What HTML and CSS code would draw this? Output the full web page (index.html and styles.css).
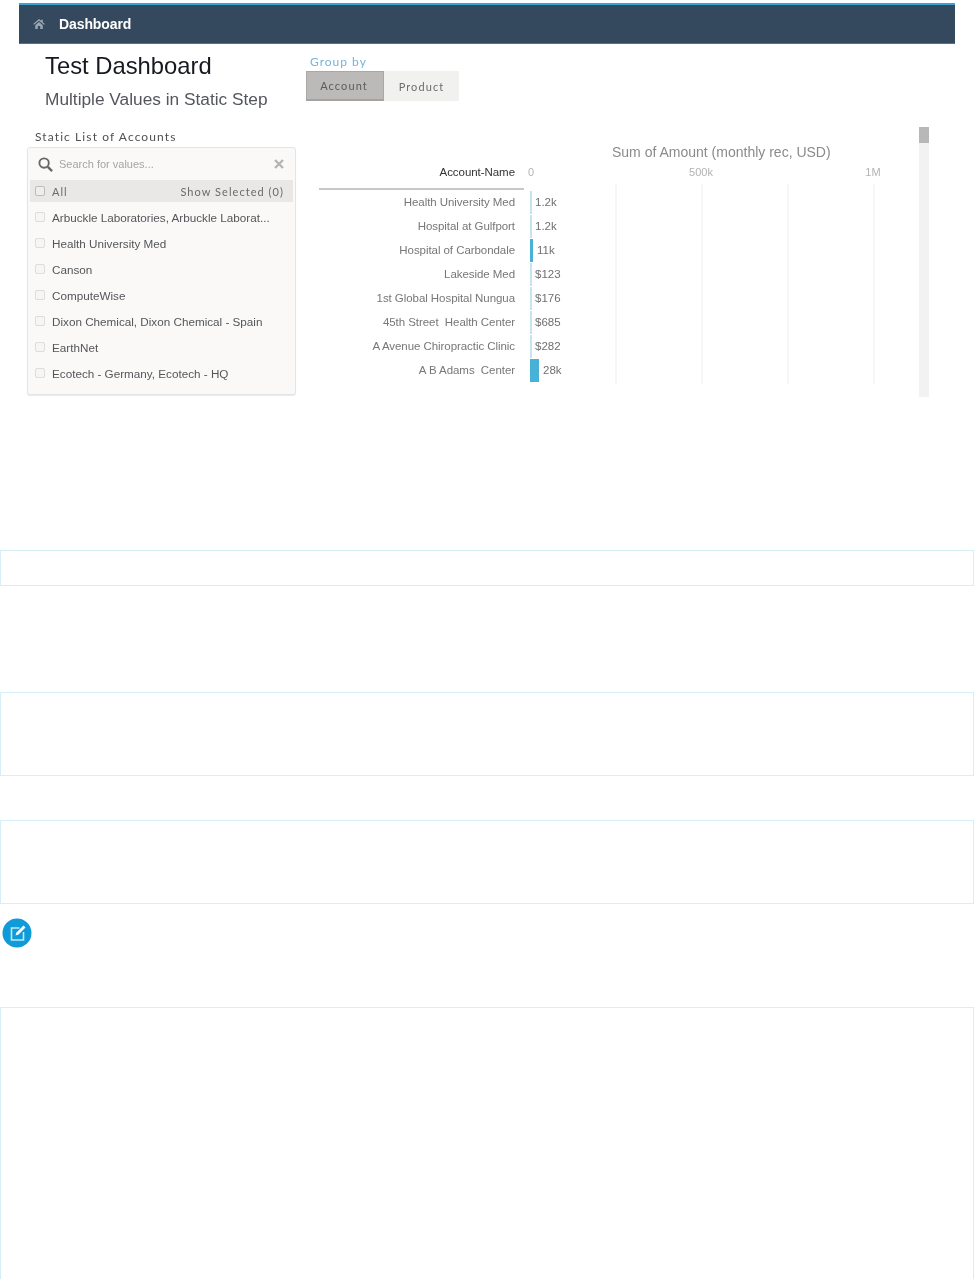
FILE: index.html
```html
<!DOCTYPE html>
<html lang="en">
<head>
<meta charset="utf-8">
<title>Test Dashboard</title>
<link rel="stylesheet" href="styles.css">
</head>
<body>
<section class="shot">
  <nav class="nav">
    <svg class="home" viewBox="0 0 14 12" aria-hidden="true"><path d="M7 0 0 6l1 1 6-5 6 5 1-1-2.500-2.100V1h-2v1.200zM2.500 7.500V12h3V8.500h3V12h3V7.500L7 3.700z"/></svg>
    <span class="nav-title">Dashboard</span>
  </nav>
  <div class="head">
    <div class="titles">
      <h1>Test Dashboard</h1>
      <h2>Multiple Values in Static Step</h2>
    </div>
    <div class="group">
      <div class="group-label">Group by</div>
      <div class="toggle"><span class="tog on">Account</span><span class="tog">Product</span></div>
    </div>
  </div>
  <div class="content">
    <div class="left">
      <div class="list-title">Static List of Accounts</div>
      <div class="panel">
        <div class="search">
          <svg class="mag" viewBox="0 0 16 16" aria-hidden="true"><circle cx="6.500" cy="6.500" r="5" fill="none" stroke="#666" stroke-width="2"/><path d="m10.500 10.500 4.500 4.500" stroke="#666" stroke-width="2.500"/></svg>
          <span class="placeholder">Search for values...</span>
          <svg class="clear" viewBox="0 0 10 10" aria-hidden="true"><path d="m1 1 8 8M9 1 1 9" stroke="#b5b5b5" stroke-width="2.400"/></svg>
        </div>
        <div class="all"><i class="check dark"></i><span class="all-label">All</span><span class="show">Show Selected (0)</span></div>
        <div class="items">
          <div class="item"><i class="check"></i>Arbuckle Laboratories, Arbuckle Laborat...</div>
          <div class="item"><i class="check"></i>Health University Med</div>
          <div class="item"><i class="check"></i>Canson</div>
          <div class="item"><i class="check"></i>ComputeWise</div>
          <div class="item"><i class="check"></i>Dixon Chemical, Dixon Chemical - Spain</div>
          <div class="item"><i class="check"></i>EarthNet</div>
          <div class="item"><i class="check"></i>Ecotech - Germany, Ecotech - HQ</div>
        </div>
      </div>
    </div>
    <div class="chart">
      <div class="plot">
        <i class="grid g1"></i><i class="grid g2"></i><i class="grid g3"></i><i class="grid g4"></i>
        <div class="measure">Sum of Amount (monthly rec, USD)</div>
        <div class="axis">
          <span class="axis-name">Account-Name</span>
          <span class="tick t0">0</span><span class="tick t1">500k</span><span class="tick t2">1M</span>
        </div>
        <div class="rule"></div>
        <div class="row"><span class="name">Health University Med</span><i class="bar thin" style="width:2px"></i><span class="val">1.2k</span></div>
        <div class="row"><span class="name">Hospital at Gulfport</span><i class="bar thin" style="width:2px"></i><span class="val">1.2k</span></div>
        <div class="row"><span class="name">Hospital of Carbondale</span><i class="bar" style="width:3px"></i><span class="val">11k</span></div>
        <div class="row"><span class="name">Lakeside Med</span><i class="bar thin" style="width:2px"></i><span class="val">$123</span></div>
        <div class="row"><span class="name">1st Global Hospital Nungua</span><i class="bar thin" style="width:2px"></i><span class="val">$176</span></div>
        <div class="row"><span class="name">45th Street&nbsp; Health Center</span><i class="bar thin" style="width:2px"></i><span class="val">$685</span></div>
        <div class="row"><span class="name">A Avenue Chiropractic Clinic</span><i class="bar thin" style="width:2px"></i><span class="val">$282</span></div>
        <div class="row"><span class="name">A B Adams&nbsp; Center</span><i class="bar" style="width:9px"></i><span class="val">28k</span></div>
      </div>
      <div class="scroll"><i class="thumb"></i></div>
    </div>
  </div>
</section>
<div class="box b1"></div>
<div class="box b2"></div>
<div class="box b3"></div>
<div class="note">
  <svg viewBox="0 0 30 30" aria-hidden="true"><circle cx="15" cy="15" r="14.500" fill="#0f9ad8"/><path d="M17.500 10H9.500v12h12v-8" fill="none" stroke="#bfe9fb" stroke-width="1.600"/><path d="m13.500 17.500 1-3 7-7 2 2-7 7z" fill="#fff"/></svg>
</div>
<div class="box b4"></div>
</body>
</html>
```
FILE: styles.css
```css
* { box-sizing: border-box; }
html, body { margin: 0; padding: 0; background: #fff; }
body { font-family: "Liberation Sans", Arial, sans-serif; height: 1279px; overflow: hidden; }
i { display: block; }

.shot { height: 405px; padding: 3px 19px 0; filter: blur(.45px); }
.nav { height: 41px; background: #34495e; border-top: 2px solid #3ba3d6; border-bottom: 1px solid #5b6d80; display: flex; align-items: center; padding-left: 14px; }
.home { width: 12px; height: 10px; fill: #9aa6b2; margin-right: 14px; }
.nav-title { color: #fff; font-size: 14px; font-weight: 700; letter-spacing: -.1px; }

.head { display: flex; height: 84px; }
.titles { width: 287px; padding: 7px 0 0 26px; }
h1 { margin: 0; font-size: 23.800px; font-weight: 400; line-height: 29px; color: #16191f; }
h2 { margin: 8px 0 0; font-size: 17.300px; font-weight: 400; line-height: 22px; color: #54565c; white-space: nowrap; }
.group { padding-top: 11px; }
.group-label { padding-left: 4px; font-family: Lato, sans-serif; font-size: 12px; line-height: 14px; letter-spacing: 1px; color: #74b4d8; }
.toggle { display: flex; margin-top: 2px; height: 30px; }
.tog { display: flex; align-items: center; justify-content: center; width: 75px; background: #f1f1f0; color: #6c6c6c; font-family: Lato, sans-serif; font-size: 11px; letter-spacing: 1.100px; }
.tog.on { width: 78px; background: #bbbab8; color: #5c5c5c; border: 1px solid #a9a8a6; border-bottom: 2px solid #a4a3a1; padding-right: 2px; }

.content { display: flex; margin-top: 2px; }
.left { width: 293px; padding: 0 0 0 8px; }
.list-title { padding-left: 8px; font-family: Lato, sans-serif; font-size: 12px; line-height: 14px; letter-spacing: 1.100px; color: #505050; margin-bottom: 3px; }
.panel { width: 269px; height: 248px; background: #faf9f8; border: 1px solid #e4e4e4; border-radius: 3px; padding: 0 2px; box-shadow: 0 1px 1px #e9e9e9; }
.search { height: 32px; display: flex; align-items: center; padding: 0 9px 0 8px; }
.mag { width: 15px; height: 15px; margin-right: 6px; }
.placeholder { flex: 1; font-size: 11px; color: #a5a5a5; }
.clear { width: 10px; height: 10px; }
.all { height: 22px; background: #e9e8e6; display: flex; align-items: center; padding: 0 9px 0 5px; font-family: Lato, sans-serif; font-size: 11px; letter-spacing: 1.050px; color: #6a6a6a; }
.all-label { flex: 1; }
.check { width: 10px; height: 10px; border: 1px solid #dddcda; border-radius: 2px; background: #f7f6f5; margin-right: 7px; flex: none; }
.check.dark { border-color: #bdbdbb; background: #eee; }
.items { padding-top: 2px; }
.item { height: 26px; display: flex; align-items: center; padding-left: 5px; font-size: 11.700px; letter-spacing: 0; color: #54565a; white-space: nowrap; }

.chart { width: 610px; margin-left: 8px; margin-top: -3px; display: flex; height: 270px; }
.plot { position: relative; width: 599px; font-size: 11.500px; color: #666; }
.grid { position: absolute; top: 57px; height: 200px; width: 2px; background: #f6f6f6; }
.g1 { left: 295px; } .g2 { left: 381px; } .g3 { left: 467px; } .g4 { left: 553px; }
.measure { height: 24px; padding: 16px 0 0 292px; font-size: 14px; line-height: 18px; color: #8b8b8b; white-space: nowrap; }
.axis { position: relative; height: 39px; padding-top: 14px; }
.axis-name { display: block; width: 195px; text-align: right; color: #333; line-height: 14px; letter-spacing: -.05px; }
.tick { position: absolute; top: 14px; line-height: 14px; font-size: 11px; color: #b3b3b3; transform: translateX(-50%); }
.t0 { left: 211px; } .t1 { left: 381px; } .t2 { left: 553px; }
.rule { position: absolute; left: -1px; top: 61px; width: 205px; height: 2px; background: #c8c8c8; }
.row { position: relative; height: 24px; display: flex; align-items: center; }
.name { width: 195px; text-align: right; white-space: nowrap; color: #777; letter-spacing: -.06px; flex: none; }
.bar { height: 23px; margin-left: 15px; background: #48b1d8; flex: none; }
.bar.thin { background: #c4e4f0; }
.bar.thin + .val { margin-left: 3px; }
.val { margin-left: 4px; color: #707070; font-size: 11.500px; }
.scroll { width: 10px; background: #f2f2f2; }
.thumb { height: 16px; background: #b8b8b8; }

.box { margin: 0; border: 1px solid #d6eef7; }
.b1 { margin-top: 145px; height: 36px; }
.b2 { margin-top: 106px; height: 84px; }
.b3 { margin-top: 44px; height: 84px; }
.note { height: 103px; padding: 14px 0 0 2px; }
.note svg { display: block; width: 30px; height: 30px; }
.b4 { height: 300px; }
```
